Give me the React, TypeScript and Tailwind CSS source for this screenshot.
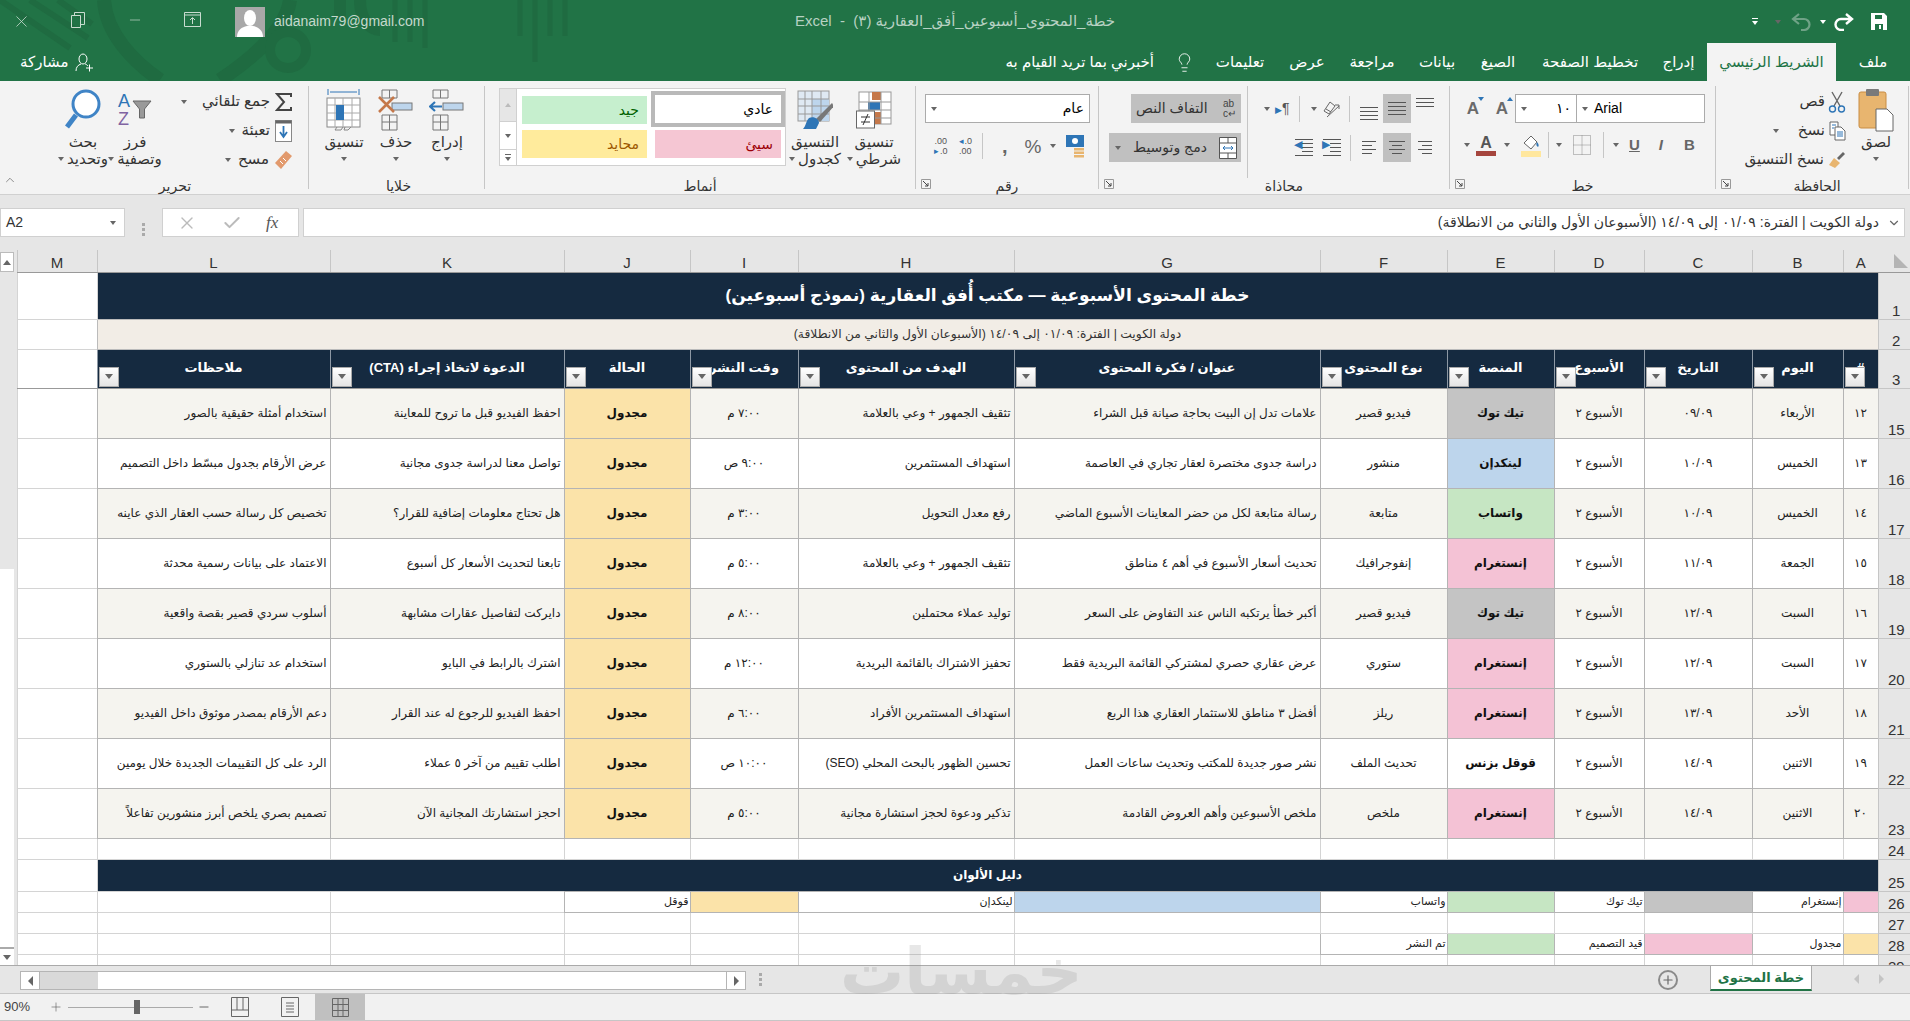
import type { ReactNode } from 'react';
import { X, Minus, Lightbulb, Check, ChevronUp, ChevronDown, Plus } from 'lucide-react';

const Caret = ({ className = '' }: { className?: string }) => (
  <span className={`inline-block h-0 w-0 border-x-[3px] border-t-[4px] border-x-transparent border-t-[#666] ${className}`} />
);

const Lines = ({ widths, align = 'center', gap = 'gap-[3px]', color = 'bg-[#555]' }: { widths: string[]; align?: string; gap?: string; color?: string }) => (
  <div className={`flex flex-col ${gap} ${align === 'center' ? 'items-center' : align === 'right' ? 'items-end' : 'items-start'}`}>
    {widths.map((w, i) => (
      <div key={i} className={`h-px ${w} ${color}`} />
    ))}
  </div>
);

const Launcher = () => (
  <svg width="10" height="10" viewBox="0 0 10 10" className="absolute bottom-0 left-[5px]">
    <path d="M.5 9.5V.5h9v9z" fill="none" stroke="#999" />
    <path d="M2 2l5 5M7 4v3H4" fill="none" stroke="#444" />
  </svg>
);

function Group({ w, label, launcher, labelClass = '', children }: { w: string; label: string; launcher?: boolean; labelClass?: string; children: ReactNode }) {
  return (
    <div className={`relative my-[5px] flex flex-col border-r border-[#c6c6c6] ${w}`}>
      <div className="flex h-[92px] shrink-0">{children}</div>
      <div className={`flex h-[16px] shrink-0 items-center justify-center text-[14px] text-[#333] ${labelClass}`}>{label}</div>
      {launcher && <Launcher />}
    </div>
  );
}

function LargeBtn({ w, icon, line1, line2, caretFirst }: { w: string; icon: ReactNode; line1: string; line2?: string; caretFirst?: boolean }) {
  return (
    <div className={`flex flex-col items-center text-[15px] leading-[17px] text-[#333] ${w}`}>
      <div className="flex h-[47px] items-center justify-center">{icon}</div>
      <div className="whitespace-nowrap">{line1}</div>
      {line2 ? (
        <div className="flex items-center gap-[3px] whitespace-nowrap">
          {caretFirst && <Caret />}
          {line2}
        </div>
      ) : (
        <div className="flex h-[17px] items-center">
          <Caret />
        </div>
      )}
    </div>
  );
}

const PasteIcon = () => (
  <svg width="36" height="46" viewBox="0 0 36 46">
    <rect x="1" y="5" width="27" height="36" rx="2" fill="#e8b56f" stroke="#c98d45" />
    <rect x="8" y="2" width="13" height="7" rx="1" fill="#7a7a7a" />
    <path d="M18 22h11l6 6v16H18z" fill="#fff" stroke="#666" />
  </svg>
);
const ScissorsIcon = () => (
  <svg width="18" height="22" viewBox="0 0 18 22" fill="none">
    <path d="M4 1l8 14M14 1L6 15" stroke="#666" strokeWidth="1.4" />
    <circle cx="4.5" cy="18" r="3" stroke="#2e75b6" strokeWidth="1.4" />
    <circle cx="13.5" cy="18" r="3" stroke="#2e75b6" strokeWidth="1.4" />
  </svg>
);
const CopyIcon = () => (
  <svg width="17" height="20" viewBox="0 0 17 20" fill="#fff">
    <path d="M1 1h8v13H1z" stroke="#666" />
    <path d="M6 6h6l4 4v9H6z" stroke="#666" />
    <path d="M3 4h4M3 7h2M8 11h6M8 13h6M8 15h6" stroke="#2e75b6" />
  </svg>
);
const BrushIcon = () => (
  <svg width="18" height="18" viewBox="0 0 18 18">
    <path d="M1 14l5-7 6 5-5 5z" fill="#e8b56f" />
    <path d="M9 7l6-6 2 2-6 6z" fill="#666" />
  </svg>
);
const GrowA = ({ up }: { up?: boolean }) => (
  <div className="relative flex h-[24px] w-[22px] items-center justify-center text-[17px] font-bold text-[#6a6a6a] font-['Liberation_Sans']">
    A
    <span className={`absolute right-0 top-0 h-0 w-0 border-x-[3px] border-x-transparent ${up ? 'border-b-[4px] border-b-[#2e75b6]' : 'border-t-[4px] border-t-[#2e75b6]'}`} />
  </div>
);
const BorderIcon = () => (
  <svg width="18" height="20" viewBox="0 0 18 20" fill="none" stroke="#888" strokeDasharray="1 1">
    <path d="M.5.5h17v19H.5zM9 .5v19M.5 10h17" />
  </svg>
);
const FillIcon = () => (
  <div className="flex flex-col items-center">
    <svg width="18" height="17" viewBox="0 0 18 17" fill="none">
      <path d="M2 9l7-7 6 6-6 7z" fill="#fff" stroke="#666" />
      <path d="M15 8c2 2 2 4 1 5-2-1-2-3-1-5z" fill="#2e75b6" />
    </svg>
    <div className="h-[6px] w-[20px] bg-[#ffe79e]" />
  </div>
);
const Orient = () => (
  <svg width="20" height="18" viewBox="0 0 20 18" fill="none" stroke="#666">
    <path d="M3 11l6-9 5 4-6 8zM5 9l5 3" />
    <path d="M6 17L18 6M14 5h4v4" />
  </svg>
);
const Accounting = () => (
  <svg width="20" height="24" viewBox="0 0 20 24">
    <rect x="1" y="1" width="18" height="12" fill="#2e75b6" />
    <circle cx="10" cy="7" r="3" fill="#fff" />
    <rect x="9" y="14" width="10" height="2.5" fill="#e8b56f" />
    <rect x="9" y="17.5" width="10" height="2.5" fill="#e8b56f" />
    <rect x="9" y="21" width="10" height="2.5" fill="#e8b56f" />
  </svg>
);
const DecIcon = ({ inc }: { inc?: boolean }) => (
  <div className="flex flex-col items-center text-[9px] leading-[10px] text-[#555] font-['Liberation_Sans']">
    <div className="flex items-center gap-px">
      {inc && <span className="text-[#2e75b6]">◂</span>}
      {inc ? '.0' : '.00'}
    </div>
    <div className="flex items-center gap-px">
      {!inc && <span className="text-[#2e75b6]">▸</span>}
      {inc ? '.00' : '.0'}
    </div>
  </div>
);
const CondIcon = () => (
  <svg width="36" height="38" viewBox="0 0 36 38">
    <rect x="3" y="1" width="32" height="32" fill="#fff" stroke="#999" />
    <rect x="16" y="1" width="9" height="8" fill="#c5784a" />
    <rect x="12" y="11" width="12" height="8" fill="#2e75b6" />
    <rect x="19" y="21" width="6" height="12" fill="#c5784a" />
    <path d="M3 11h32M3 19h32M3 27h32M13 1v32M25 1v32" stroke="#999" fill="none" />
    <rect x=".5" y="20" width="18" height="17" fill="#fff" stroke="#666" />
    <path d="M5 26h9M5 31h9M12 23l-5 11" stroke="#333" fill="none" />
  </svg>
);
const TableStyleIcon = () => (
  <svg width="36" height="40" viewBox="0 0 36 40">
    <rect x="1" y="1" width="31" height="30" fill="#dfe9f3" stroke="#999" />
    <rect x="15" y="9" width="17" height="22" fill="#bdd5ec" />
    <path d="M1 9h31M1 16h31M1 24h31M8 1v30M15 1v30M24 1v30" stroke="#999" fill="none" />
    <path d="M35 13l2 3-14 16-4-3z" fill="#777" />
    <path d="M12 28c5-2 10 1 10 5l-3 6H6c3-3 3-8 6-11z" fill="#2e75b6" />
  </svg>
);
const InsertIcon = ({ del }: { del?: boolean }) => (
  <svg width="36" height="42" viewBox="0 0 36 42" fill="none">
    <path d="M4 1h15v8H4zM11.5 1v8" stroke="#777" />
    <path d="M4 26h15v15H4zM4 33h15M11.5 26v15" stroke="#777" />
    <rect x="14" y="14" width="20" height="7" fill="#bdd5ec" stroke="#777" />
    {del ? (
      <path d="M1 8l15 15M16 8L1 23" stroke="#c5784a" strokeWidth="2.6" />
    ) : (
      <path d="M13 17.5H2M6 13l-5 4.5L6 22" stroke="#2e75b6" strokeWidth="2.2" />
    )}
  </svg>
);
const FormatIcon = () => (
  <svg width="36" height="44" viewBox="0 0 36 44" fill="none">
    <path d="M2 1v6M33 1v6M4 4h27" stroke="#2e75b6" />
    <rect x="1" y="10" width="33" height="29" fill="#fff" stroke="#888" />
    <path d="M1 17h33M1 25h33M1 32h33M9 10v29M17 10v29M26 10v29" stroke="#aaa" />
    <rect x="10" y="17" width="8" height="15" fill="#2e75b6" />
    <path d="M11 39l-2 3h6l2-3M19 39l-1 3h4l3-3" stroke="#888" />
  </svg>
);
const AzIcon = () => (
  <div className="flex items-center gap-[2px] font-['Liberation_Sans']">
    <div className="flex flex-col text-[18px] font-normal leading-[18px]">
      <span className="text-[#2e75b6]">A</span>
      <span className="text-[#8064a2]">Z</span>
    </div>
    <svg width="20" height="22" viewBox="0 0 20 22">
      <path d="M1 2h18l-6.5 8v9h-5v-9z" fill="#999" stroke="#666" />
    </svg>
  </div>
);
const SearchIcon = () => (
  <svg width="36" height="42" viewBox="0 0 36 42" fill="none">
    <circle cx="21" cy="15" r="13" stroke="#3f84c6" strokeWidth="3" fill="#fff" />
    <path d="M11 26L2 38" stroke="#3f84c6" strokeWidth="5" />
  </svg>
);
const FillDown = () => (
  <svg width="17" height="22" viewBox="0 0 17 22">
    <rect x=".5" y=".5" width="16" height="21" fill="#fff" stroke="#888" />
    <rect x=".5" y=".5" width="16" height="3" fill="#666" />
    <path d="M8.5 6v11M5 12l3.5 5 3.5-5" stroke="#2e75b6" strokeWidth="1.8" fill="none" />
  </svg>
);
const Eraser = () => (
  <svg width="18" height="20" viewBox="0 0 18 20">
    <path d="M1 13L12 1l6 5L7 19z" fill="#e29a6d" />
    <path d="M6 11l3 3M9 8l3 3" stroke="#fff" />
  </svg>
);
const Sigma = () => (
  <svg width="17" height="18" viewBox="0 0 17 18" fill="none">
    <path d="M16 4V1H2l7 8-7 8h14v-3" stroke="#444" strokeWidth="2" />
  </svg>
);

function StyleCell({ w, bg, text, label, box }: { w: string; bg: string; text: string; label: string; box?: boolean }) {
  return (
    <div className={`flex items-center justify-end pr-[8px] text-[14px] ${w} ${bg} ${text} ${box ? 'h-[36px] border-[4px] border-[#b9b9b9]' : 'h-[28px]'}`}>{label}</div>
  );
}

function Ribbon() {
  return (
    <div className="flex h-[114px] border-b border-[#d0d0d0] bg-[#f3f3f3]">
      <div className="flex w-[46px] items-end pb-[7px] pl-[3px]">
        <ChevronUp size={14} strokeWidth={1} className="text-[#444]" />
      </div>

      <Group w="w-[263px]" label="تحرير" labelClass="pr-[4px]">
        <div className="ml-[12px] w-[50px]">
          <LargeBtn w="w-full" icon={<SearchIcon />} line1="بحث" line2="وتحديد" caretFirst />
        </div>
        <LargeBtn w="w-[54px]" icon={<AzIcon />} line1="فرز" line2="وتصفية" caretFirst />
        <div className="flex w-[130px] flex-col items-end pt-[1px] text-[15px] text-[#333]">
          {[
            { t: 'جمع تلقائي', i: <Sigma />, m: 'mr-[10px]' },
            { t: 'تعبئة', i: <FillDown />, m: 'mr-[1px]' },
            { t: 'مسح', i: <Eraser />, m: 'mr-[2px]' },
          ].map((r) => (
            <div key={r.t} className="flex h-[29px] items-center gap-[5px]">
              <Caret className={r.m} />
              <span className="whitespace-nowrap">{r.t}</span>
              {r.i}
            </div>
          ))}
        </div>
      </Group>

      <Group w="w-[176px]" label="خلايا" labelClass="pl-[4px]">
        <div className="ml-[9px] flex">
          <LargeBtn w="w-[52px]" icon={<FormatIcon />} line1="تنسيق" />
          <LargeBtn w="w-[52px]" icon={<InsertIcon del />} line1="حذف" />
          <LargeBtn w="w-[50px]" icon={<InsertIcon />} line1="إدراج" />
        </div>
      </Group>

      <Group w="w-[431px]" label="أنماط">
        <div className="ml-[14px] mt-[2px] flex h-[78px] w-[287px] border border-[#d0d0d0] bg-white">
          <div className="flex w-[18px] flex-col border-r border-[#d0d0d0] text-[#888]">
            <div className="flex h-[32px] items-center justify-center bg-[#e6e6e6]"><span className="h-0 w-0 border-x-[3px] border-b-[4px] border-x-transparent border-b-[#bbb]" /></div>
            <div className="flex h-[29px] items-center justify-center border-y border-[#d0d0d0]"><Caret /></div>
            <div className="flex flex-1 flex-col items-center justify-center gap-[2px]"><div className="h-px w-[6px] bg-[#666]" /><Caret /></div>
          </div>
          <div className="flex flex-1 gap-[4px] py-[2px] pl-[5px]">
            <div className="flex w-[125px] flex-col justify-between py-[5px]">
              <StyleCell w="w-full" bg="bg-[#c6efce]" text="text-[#006100]" label="جيد" />
              <StyleCell w="w-full" bg="bg-[#ffeb9c]" text="text-[#9c5700]" label="محايد" />
            </div>
            <div className="flex w-[134px] flex-col justify-between pb-[5px]">
              <StyleCell w="w-full" bg="bg-white" text="text-black" label="عادي" box />
              <div className="pl-[4px] pr-[4px]"><StyleCell w="w-full" bg="bg-[#f5c6d3]" text="text-[#9c0006]" label="سيئ" /></div>
            </div>
          </div>
        </div>
        <div className="flex">
          <LargeBtn w="w-[58px]" icon={<TableStyleIcon />} line1="التنسيق" line2="كجدول" caretFirst />
          <LargeBtn w="w-[60px]" icon={<CondIcon />} line1="تنسيق" line2="شرطي" caretFirst />
        </div>
      </Group>

      <Group w="w-[183px]" label="رقم" launcher>
        <div className="ml-[9px] flex w-[165px] flex-col">
          <div className="mt-[8px] flex h-[29px] items-center justify-between border border-[#ababab] bg-white px-[5px] text-[14px]">
            <Caret />
            <span>عام</span>
          </div>
          <div className="mt-[10px] flex items-center pl-[9px] text-[#666]">
            <DecIcon />
            <div className="ml-[11px]"><DecIcon inc /></div>
            <div className="ml-[10px] h-[26px] w-px bg-[#c6c6c6]" />
            <span className="ml-[19px] text-[20px] font-bold leading-none font-['Liberation_Sans']">,</span>
            <span className="ml-[17px] text-[19px] leading-none font-['Liberation_Sans']">%</span>
            <Caret className="ml-[8px]" />
            <div className="ml-[9px]"><Accounting /></div>
          </div>
        </div>
      </Group>

      <Group w="w-[351px]" label="محاذاة" launcher labelClass="pl-[20px]">
        <div className="flex w-[148px] flex-col items-end gap-[10px] pt-[8px] pr-[6px] text-[14px] text-[#333]">
          <div className="flex h-[29px] w-[110px] items-center justify-between bg-[#c0c0c0] px-[5px]">
            <span className="whitespace-nowrap">التفاف النص</span>
            <div className="flex flex-col text-[10px] leading-[10px] text-[#444] font-['Liberation_Sans']"><span>ab</span><span>c↵</span></div>
          </div>
          <div className="flex h-[29px] w-[132px] items-center justify-between bg-[#c0c0c0] pl-[6px] pr-[4px]">
            <Caret />
            <span className="whitespace-nowrap">دمج وتوسيط</span>
            <svg width="18" height="22" viewBox="0 0 18 22" fill="#fff" stroke="#555"><path d="M.5.5h17v21H.5zM.5 6h17M.5 16h17M9 .5V6M9 16v5.5" /><path d="M4 11h10M6 9l-2 2 2 2M12 9l2 2-2 2" stroke="#2e75b6" fill="none" /></svg>
          </div>
        </div>
        <div className="flex flex-1 flex-col gap-[10px] border-l border-[#c6c6c6] pt-[8px]">
          <div className="flex h-[29px] items-center pl-[16px] text-[#555]">
            <Caret />
            <span className="ml-[5px] text-[14px] font-['Liberation_Sans']"><span className="text-[9px] text-[#2e75b6]">▶</span>¶</span>
            <div className="ml-[9px] h-[26px] w-px bg-[#c6c6c6]" />
            <Caret className="ml-[11px]" />
            <div className="ml-[4px]"><Orient /></div>
            <div className="ml-[8px] h-[26px] w-px bg-[#c6c6c6]" />
            <div className="ml-[10px] mt-[10px] w-[18px]"><Lines widths={['w-full', 'w-full', 'w-full', 'w-full']} /></div>
            <div className="ml-[5px] flex h-[29px] w-[28px] items-center justify-center bg-[#c0c0c0]"><Lines widths={['w-[18px]', 'w-[18px]', 'w-[18px]', 'w-[18px]']} /></div>
            <div className="ml-[5px] mb-[12px] w-[18px]"><Lines widths={['w-full', 'w-full', 'w-full']} /></div>
          </div>
          <div className="flex h-[29px] items-center pl-[47px] text-[#555]">
            <div className="relative w-[18px]"><Lines widths={['w-full', 'w-[11px]', 'w-[11px]', 'w-[11px]', 'w-full']} align="right" /><span className="absolute left-[-1px] top-[-3px] text-[11px] text-[#2e75b6]">◀</span></div>
            <div className="relative ml-[10px] w-[18px]"><Lines widths={['w-full', 'w-[11px]', 'w-[11px]', 'w-[11px]', 'w-full']} align="right" /><span className="absolute left-[-1px] top-[-3px] text-[11px] text-[#2e75b6]">▶</span></div>
            <div className="ml-[9px] h-[26px] w-px bg-[#c6c6c6]" />
            <div className="ml-[11px]"><Lines widths={['w-[14px]', 'w-[10px]', 'w-[14px]', 'w-[10px]']} align="left" /></div>
            <div className="ml-[7px] flex h-[29px] w-[28px] items-center justify-center bg-[#c0c0c0]"><Lines widths={['w-[16px]', 'w-[10px]', 'w-[16px]', 'w-[10px]']} /></div>
            <div className="ml-[7px]"><Lines widths={['w-[14px]', 'w-[10px]', 'w-[14px]', 'w-[10px]']} align="right" /></div>
          </div>
        </div>
      </Group>

      <Group w="w-[266px]" label="خط" launcher>
        <div className="flex w-full flex-col">
          <div className="mt-[8px] flex h-[29px] items-center pl-[12px]">
            <GrowA />
            <div className="ml-[7px]"><GrowA up /></div>
            <div className="ml-[2px] flex h-full w-[62px] items-center justify-between border border-[#ababab] bg-white px-[5px] text-[14px]">
              <Caret />
              <span>١٠</span>
            </div>
            <div className="flex h-full w-[128px] items-center border-y border-r border-[#ababab] bg-white px-[5px] text-[14px] font-['Liberation_Sans']">
              <Caret className="mr-[6px]" />
              Arial
            </div>
          </div>
          <div className="mt-[9px] flex items-center pl-[14px] text-[#666] font-['Liberation_Sans']">
            <Caret />
            <div className="ml-[6px] flex w-[20px] flex-col items-center">
              <span className="text-[16px] font-bold leading-[16px] text-[#555]">A</span>
              <div className="h-[5px] w-full bg-[#a5453d]" />
            </div>
            <Caret className="ml-[8px]" />
            <div className="ml-[11px]"><FillIcon /></div>
            <div className="ml-[7px] h-[26px] w-px bg-[#c6c6c6]" />
            <Caret className="ml-[7px]" />
            <div className="ml-[11px]"><BorderIcon /></div>
            <div className="ml-[12px] h-[26px] w-px bg-[#c6c6c6]" />
            <Caret className="ml-[9px]" />
            <span className="ml-[10px] text-[15px] font-bold underline">U</span>
            <span className="ml-[19px] text-[15px] font-bold italic">I</span>
            <span className="ml-[21px] text-[15px] font-bold">B</span>
          </div>
        </div>
      </Group>

      <Group w="w-[193px]" label="الحافظة" launcher labelClass="pl-[10px]">
        <div className="flex w-[140px] flex-col items-end pr-[10px] pt-[1px] text-[15px] text-[#333]">
          <div className="flex h-[29px] items-center gap-[3px]"><span>قص</span><ScissorsIcon /></div>
          <div className="flex h-[29px] items-center gap-[4px]"><Caret className="mr-[15px]" /><span>نسخ</span><CopyIcon /></div>
          <div className="flex h-[29px] items-center gap-[4px]"><span className="whitespace-nowrap">نسخ التنسيق</span><BrushIcon /></div>
        </div>
        <LargeBtn w="w-[40px]" icon={<PasteIcon />} line1="لصق" />
      </Group>
      <div className="flex-1" />
    </div>
  );
}

const titleBg = (
  <svg width="640" height="81" viewBox="0 0 640 81" className="absolute left-0 top-0" fill="none" stroke="#1f6b41">
    <path d="M0 0l70 48M30 0l58 38M58 0l34 24" strokeWidth="6" />
    <path d="M104 0c2 34 30 62 56 80M290 0c-4 30-40 60-70 80" strokeWidth="14" />
    <circle cx="288" cy="50" r="18" strokeWidth="10" />
    <path d="M395 0v42M410 0v42M425 0v48M520 0v36M535 0v62M550 0v36M565 0v36" strokeWidth="5" />
    <path d="M340 0v20M360 0c0 20 10 30 20 30" strokeWidth="12" />
  </svg>
);

function Chrome() {
  const tabs = [
    { t: 'ملف', w: 'w-[74px]' },
    { t: 'الشريط الرئيسي', w: 'w-[129px]', active: true },
    { t: 'إدراج', w: 'w-[57px]' },
    { t: 'تخطيط الصفحة', w: 'w-[120px]' },
    { t: 'الصيغ', w: 'w-[64px]' },
    { t: 'بيانات', w: 'w-[58px]' },
    { t: 'مراجعة', w: 'w-[72px]' },
    { t: 'عرض', w: 'w-[58px]' },
    { t: 'تعليمات', w: 'w-[76px]' },
  ];
  return (
    <div className="relative h-[81px] overflow-hidden bg-[#217346] text-white">
      {titleBg}
      <div className="relative grid h-[43px] grid-cols-[1fr_auto_1fr] items-center">
        <div className="flex items-center">
          <div className="flex gap-[15px] text-[#c9dcd0]">
            <div className="flex w-[42px] justify-center"><X size={19} strokeWidth={1} /></div>
            <div className="flex w-[42px] justify-center">
              <svg width="14" height="16" viewBox="0 0 14 16" fill="none" stroke="currentColor"><path d="M.5 3.5h9v12h-9zM3.5 3V.5h10v12H10" /></svg>
            </div>
            <div className="flex w-[42px] justify-center"><Minus size={16} strokeWidth={1} /></div>
            <div className="flex w-[42px] justify-center">
              <svg width="17" height="15" viewBox="0 0 17 15" fill="none" stroke="currentColor"><path d="M.5.5h16v14H.5zM.5 3h16M8.5 12V6M6 8l2.5-2.5L11 8" /></svg>
            </div>
          </div>
          <div className="ml-[22px] flex h-[30px] w-[30px] items-end justify-center overflow-hidden bg-[#a8a8a8]">
            <svg width="26" height="28" viewBox="0 0 26 28" fill="#fff"><ellipse cx="13" cy="9" rx="6" ry="8" /><path d="M0 28c0-7 5-10 10-11h6c5 1 10 4 10 11z" /></svg>
          </div>
          <span className="ml-[9px] text-[14px] text-[#c5d9cd]">aidanaim79@gmail.com</span>
        </div>
        <div dir="rtl" className="whitespace-nowrap text-[15px] text-[#b7d1c2]">
          خطة_المحتوى_أسبوعين_أفق_العقارية (٣) &nbsp;-&nbsp; Excel
        </div>
        <div className="flex items-center justify-end pr-[23px]">
          <div className="flex w-[14px] flex-col items-center gap-[2px]"><div className="h-px w-[6px] bg-white" /><Caret className="border-t-white" /></div>
          <Caret className="ml-[13px] border-t-[#6fa286]" />
          <svg width="20" height="18" viewBox="0 0 20 18" fill="none" stroke="#6fa286" strokeWidth="2.2" className="ml-[10px]"><path d="M8 1L2 6l6 5M2 6h11a5 5 0 0 1 0 11h-3" /></svg>
          <Caret className="ml-[9px] border-t-white" />
          <svg width="20" height="18" viewBox="0 0 20 18" fill="none" stroke="#fff" strokeWidth="2.4" className="ml-[8px]"><path d="M12 1l6 5-6 5M18 6H7a5 5 0 0 0 0 11h3" /></svg>
          <svg width="16" height="17" viewBox="0 0 16 17" fill="#fff" className="ml-[17px]"><path d="M0 0h13l3 3v14H0zM4 2v4h7V2zM4 11v6h8v-6z" fillRule="evenodd" /><rect x="8" y="12" width="2" height="4" /></svg>
        </div>
      </div>
      <div className="relative flex h-[38px] items-stretch justify-between">
        <div className="flex items-center gap-[7px] pl-[20px] text-[15px]">
          <span>مشاركة</span>
          <svg width="19" height="19" viewBox="0 0 19 19" fill="none" stroke="#fff"><ellipse cx="8" cy="6" rx="4" ry="5" /><path d="M1 18c0-4 2-6 5-7M10 11c1 0 2 1 3 2M11 15h7M14.5 11.5v7" /></svg>
        </div>
        <div className="flex flex-row-reverse items-stretch text-[15px]">
          {tabs.map((t) => (
            <div key={t.t} className={`flex items-center justify-center whitespace-nowrap ${t.w} ${t.active ? 'bg-[#f3f3f3] text-[#217346]' : ''}`}>{t.t}</div>
          ))}
          <div className="flex w-[36px] items-center justify-center"><Lightbulb size={21} strokeWidth={1} /></div>
          <div className="flex items-center pr-[12px]">أخبرني بما تريد القيام به</div>
        </div>
      </div>
    </div>
  );
}

function FormulaBar() {
  return (
    <div className="flex h-[55px] bg-[#e6e6e6] pt-[13px]">
      <div className="flex h-[29px] w-[125px] items-center justify-between border border-[#d0d0d0] bg-white pl-[5px] pr-[8px] text-[14px] text-[#333] font-['Liberation_Sans']">
        A2
        <Caret />
      </div>
      <div className="flex w-[37px] flex-col items-center justify-center gap-[2px]">
        <div className="h-[3px] w-[3px] bg-[#aaa]" /><div className="h-[3px] w-[3px] bg-[#aaa]" /><div className="h-[3px] w-[3px] bg-[#aaa]" />
      </div>
      <div className="flex h-[29px] w-[137px] items-center border border-[#d0d0d0] bg-white pl-[14px] text-[#bbb]">
        <X size={20} strokeWidth={1.6} />
        <Check size={20} strokeWidth={2.4} className="ml-[25px]" />
        <span className="ml-[24px] text-[17px] italic text-[#555] font-['Liberation_Serif']">fx</span>
      </div>
      <div className="ml-[4px] mr-[5px] flex h-[29px] flex-1 items-center border border-[#d0d0d0] bg-white pl-[8px] pr-[3px] text-[14px] text-[#333]" dir="rtl">
        <ChevronDown size={14} strokeWidth={2} className="ml-[8px] text-[#666]" />
        <span>دولة الكويت | الفترة: ٠١/٠٩ إلى ١٤/٠٩ (الأسبوعان الأول والثاني من الانطلاقة)</span>
      </div>
    </div>
  );
}

const rows = [
  ['١٢', 'الأربعاء', '٠٩/٠٩', 'تيك توك', 'فيديو قصير', 'علامات تدل إن البيت بحاجة صيانة قبل الشراء', 'تثقيف الجمهور + وعي بالعلامة', '٧:٠٠ م', 'احفظ الفيديو قبل ما تروح للمعاينة', 'استخدام أمثلة حقيقية بالصور', '15'],
  ['١٣', 'الخميس', '١٠/٠٩', 'لينكدإن', 'منشور', 'دراسة جدوى مختصرة لعقار تجاري في العاصمة', 'استهداف المستثمرين', '٩:٠٠ ص', 'تواصل معنا لدراسة جدوى مجانية', 'عرض الأرقام بجدول مبسّط داخل التصميم', '16'],
  ['١٤', 'الخميس', '١٠/٠٩', 'واتساب', 'متابعة', 'رسالة متابعة لكل من حضر المعاينات الأسبوع الماضي', 'رفع معدل التحويل', '٣:٠٠ م', 'هل تحتاج معلومات إضافية للقرار؟', 'تخصيص كل رسالة حسب العقار الذي عاينه', '17'],
  ['١٥', 'الجمعة', '١١/٠٩', 'إنستغرام', 'إنفوجرافيك', 'تحديث أسعار الأسبوع في أهم ٤ مناطق', 'تثقيف الجمهور + وعي بالعلامة', '٥:٠٠ م', 'تابعنا لتحديث الأسعار كل أسبوع', 'الاعتماد على بيانات رسمية محدثة', '18'],
  ['١٦', 'السبت', '١٢/٠٩', 'تيك توك', 'فيديو قصير', 'أكبر خطأ يرتكبه الناس عند التفاوض على السعر', 'توليد عملاء محتملين', '٨:٠٠ م', 'دايركت لتفاصيل عقارات مشابهة', 'أسلوب سردي قصير بقصة واقعية', '19'],
  ['١٧', 'السبت', '١٢/٠٩', 'إنستغرام', 'ستوري', 'عرض عقاري حصري لمشتركي القائمة البريدية فقط', 'تحفيز الاشتراك بالقائمة البريدية', '١٢:٠٠ م', 'اشترك بالرابط في البايو', 'استخدام عد تنازلي بالستوري', '20'],
  ['١٨', 'الأحد', '١٣/٠٩', 'إنستغرام', 'ريلز', 'أفضل ٣ مناطق للاستثمار العقاري هذا الربع', 'استهداف المستثمرين الأفراد', '٦:٠٠ م', 'احفظ الفيديو للرجوع له عند القرار', 'دعم الأرقام بمصدر موثوق داخل الفيديو', '21'],
  ['١٩', 'الاثنين', '١٤/٠٩', 'قوقل بزنس', 'تحديث الملف', 'نشر صور جديدة للمكتب وتحديث ساعات العمل', 'تحسين الظهور بالبحث المحلي (SEO)', '١٠:٠٠ ص', 'اطلب تقييم من آخر ٥ عملاء', 'الرد على كل التقييمات الجديدة خلال يومين', '22'],
  ['٢٠', 'الاثنين', '١٤/٠٩', 'إنستغرام', 'ملخص', 'ملخص الأسبوعين وأهم العروض القادمة', 'تذكير ودعوة لحجز استشارة مجانية', '٥:٠٠ م', 'احجز استشارتك المجانية الآن', 'تصميم بصري يلخص أبرز منشورين تفاعلاً', '23'],
];

const platformBg: Record<string, string> = {
  'تيك توك': 'bg-[#c4c4c4]',
  'لينكدإن': 'bg-[#bdd5ec]',
  'واتساب': 'bg-[#c6e6c3]',
  'إنستغرام': 'bg-[#f4c2d5]',
  'قوقل بزنس': 'bg-white',
};

const letters = ['A', 'B', 'C', 'D', 'E', 'F', 'G', 'H', 'I', 'J', 'K', 'L', 'M'];
const headers = ['#', 'اليوم', 'التاريخ', 'الأسبوع', 'المنصة', 'نوع المحتوى', 'عنوان / فكرة المحتوى', 'الهدف من المحتوى', 'وقت النشر', 'الحالة', 'الدعوة لاتخاذ إجراء (CTA)', 'ملاحظات'];

const RowHead = ({ n }: { n: string }) => (
  <td className="border-b border-l border-b-[#c6c6c6] border-l-[#c6c6c6] bg-[#e6e6e6] pl-[4px] text-center align-bottom text-[15px] leading-[17px] text-[#333] font-['Liberation_Sans']">{n}</td>
);

const grid = 'border border-[#d4d4d4]';
const strong = 'border border-[#b4b4b4]';

function FilterBtn() {
  return (
    <span className="absolute bottom-[1px] left-[1px] flex h-[20px] w-[20px] items-center justify-center border border-[#aaa] bg-gradient-to-b from-white to-[#e4e4e4]">
      <Caret className="border-x-[4px] border-t-[5px]" />
    </span>
  );
}

function LegendRow({ n, cells }: { n: string; cells: { bg?: string; t?: string }[] }) {
  return (
    <tr className="h-[21px]">
      <RowHead n={n} />
      {letters.map((l, i) => {
        const c = cells[i];
        return (
          <td key={l} className={`${c ? strong : grid} px-[1px] text-right text-[11px] text-[#222] ${c?.bg ?? ''}`}>
            {c?.t}
          </td>
        );
      })}
    </tr>
  );
}

function Sheet() {
  return (
    <div className="flex h-[715px] overflow-hidden bg-[#e6e6e6]">
      <div className="flex w-[17px] flex-col pr-[3px]">
        <div className="mt-[2px] flex h-[20px] shrink-0 items-center justify-center border border-[#bbb] bg-white"><span className="h-0 w-0 border-x-[4px] border-b-[5px] border-x-transparent border-b-[#666]" /></div>
        <div className="h-[297px] shrink-0" />
        <div className="flex-1 bg-white" />
        <div className="flex h-[18px] shrink-0 items-center justify-center border-t-2 border-[#aaa] bg-white"><Caret className="border-x-[4px] border-t-[5px]" /></div>
      </div>
      <table dir="rtl" className="w-[1893px] table-fixed border-collapse self-start bg-white">
        <colgroup>
          <col className="w-[32px]" />
          <col className="w-[35px]" />
          <col className="w-[91px]" />
          <col className="w-[108px]" />
          <col className="w-[90px]" />
          <col className="w-[107px]" />
          <col className="w-[127px]" />
          <col className="w-[306px]" />
          <col className="w-[216px]" />
          <col className="w-[108px]" />
          <col className="w-[126px]" />
          <col className="w-[234px]" />
          <col className="w-[233px]" />
          <col className="w-[80px]" />
        </colgroup>
        <tbody>
          <tr className="h-[22px]">
            <td className="border-b border-[#999] bg-[#e6e6e6] align-top">
              <div className="ml-auto mr-[2px] mt-[4px] h-0 w-0 border-b-[14px] border-r-[14px] border-b-[#b4b4b4] border-r-transparent" />
            </td>
            {letters.map((l) => (
              <td key={l} className="border-b border-l border-b-[#999] border-l-[#c6c6c6] bg-[#e6e6e6] pt-[3px] text-center text-[15px] leading-[15px] text-[#333] font-['Liberation_Sans']">{l}</td>
            ))}
          </tr>
          <tr className="h-[47px]">
            <RowHead n="1" />
            <td colSpan={12} className="bg-[#152a40] text-center text-[17px] font-bold text-white">
              خطة المحتوى الأسبوعية — مكتب أُفق العقارية (نموذج أسبوعين)
            </td>
            <td className={grid} />
          </tr>
          <tr className="h-[30px]">
            <RowHead n="2" />
            <td colSpan={12} className="border border-[#bbb] bg-[#f2ede6] text-center text-[12.3px] text-[#333]">
              دولة الكويت | الفترة: ٠١/٠٩ إلى ١٤/٠٩ (الأسبوعان الأول والثاني من الانطلاقة)
            </td>
            <td className={grid} />
          </tr>
          <tr className="h-[39px]">
            <RowHead n="3" />
            {headers.map((h) => (
              <td key={h} className="relative border-x border-b border-x-[#8d98a4] border-b-[#999] bg-[#152a40] text-center text-[13px] font-bold text-white">
                <span className="relative bottom-[1px]">{h}</span>
                <FilterBtn />
              </td>
            ))}
            <td className="border-x border-b border-x-[#d4d4d4] border-b-[#999]" />
          </tr>
          {rows.map((r, i) => {
            const bg = i % 2 === 0 ? 'bg-[#f5f4ef]' : 'bg-white';
            const c = `${strong} ${bg} text-center text-[12px] text-[#222]`;
            const t = `${strong} ${bg} whitespace-nowrap pr-[3px] text-right text-[12px] text-[#222]`;
            return (
              <tr key={r[0]} className="h-[50px]">
                <RowHead n={r[10]} />
                <td className={c}>{r[0]}</td>
                <td className={c}>{r[1]}</td>
                <td className={c}>{r[2]}</td>
                <td className={c}>الأسبوع ٢</td>
                <td className={`${strong} ${platformBg[r[3]]} text-center text-[12px] font-bold text-[#111]`}>{r[3]}</td>
                <td className={c}>{r[4]}</td>
                <td className={t}>{r[5]}</td>
                <td className={t}>{r[6]}</td>
                <td className={c}>{r[7]}</td>
                <td className={`${strong} bg-[#fbe3a9] text-center text-[12px] font-bold text-[#111]`}>مجدول</td>
                <td className={t}>{r[8]}</td>
                <td className={t}>{r[9]}</td>
                <td className={grid} />
              </tr>
            );
          })}
          <LegendRow n="24" cells={[]} />
          <tr className="h-[32px]">
            <RowHead n="25" />
            <td colSpan={12} className="bg-[#152a40] text-center text-[12px] font-bold text-white">دليل الألوان</td>
            <td className={grid} />
          </tr>
          <LegendRow
            n="26"
            cells={[
              { bg: 'bg-[#f4c2d5]' }, { t: 'إنستغرام' }, { bg: 'bg-[#c4c4c4]' }, { t: 'تيك توك' }, { bg: 'bg-[#c6e6c3]' }, { t: 'واتساب' },
              { bg: 'bg-[#bdd5ec]' }, { t: 'لينكدإن' }, { bg: 'bg-[#fbe3a9]' }, { t: 'قوقل' },
            ]}
          />
          <LegendRow n="27" cells={[]} />
          <LegendRow
            n="28"
            cells={[
              { bg: 'bg-[#fbe3a9]' }, { t: 'مجدول' }, { bg: 'bg-[#f4c2d5]' }, { t: 'قيد التصميم' }, { bg: 'bg-[#c6e6c3]' }, { t: 'تم النشر' },
            ]}
          />
          <LegendRow n="29" cells={[]} />
        </tbody>
      </table>
    </div>
  );
}

function BottomBars() {
  return (
    <>
      <div className="flex h-[28px] items-start border-t border-[#aaa] bg-[#e6e6e6]">
        <div className="ml-[20px] mt-[5px] flex h-[19px] w-[726px] shrink-0 border border-[#b5b5b5] bg-white">
          <div className="flex w-[19px] items-center justify-center border-r border-[#b5b5b5]"><span className="h-0 w-0 border-y-[5px] border-r-[5px] border-y-transparent border-r-[#666]" /></div>
          <div className="w-[58px] bg-[#d9d9d9]" />
          <div className="flex-1" />
          <div className="flex w-[19px] items-center justify-center border-l border-[#b5b5b5]"><span className="h-0 w-0 border-y-[5px] border-l-[5px] border-y-transparent border-l-[#666]" /></div>
        </div>
        <div className="ml-[13px] mt-[7px] flex flex-col gap-[2px]">
          <div className="h-[3px] w-[3px] bg-[#aaa]" /><div className="h-[3px] w-[3px] bg-[#aaa]" /><div className="h-[3px] w-[3px] bg-[#aaa]" />
        </div>
        <div className="flex-1" />
        <div className="mt-[4px] flex h-[20px] w-[20px] items-center justify-center rounded-full border-2 border-[#8a8a8a] text-[#666]"><Plus size={14} strokeWidth={2} /></div>
        <div className="ml-[32px] flex h-[25px] w-[102px] items-center justify-center border-x border-b-[2px] border-x-[#aaa] border-b-[#217346] bg-white text-[13px] font-bold text-[#217346]">خطة المحتوى</div>
        <div className="ml-[42px] mt-[8px] flex gap-[20px] pr-[26px]">
          <span className="h-0 w-0 border-y-[5px] border-r-[5px] border-y-transparent border-r-[#c4c4c4]" />
          <span className="h-0 w-0 border-y-[5px] border-l-[5px] border-y-transparent border-l-[#c4c4c4]" />
        </div>
      </div>
      <div className="flex h-[28px] items-stretch border-y border-t-[#c6c6c6] border-b-[#c6c6c6] bg-[#f1f1f1] text-[#555]">
        <span className="ml-[4px] w-[30px] self-center text-[13px] text-[#444] font-['Liberation_Sans']">90%</span>
        <div className="ml-[15px] flex items-center">
          <Plus size={14} strokeWidth={1} />
          <div className="relative ml-[5px] h-px w-[125px] bg-[#aaa]">
            <div className="absolute left-[66px] top-[-7px] h-[14px] w-[6px] bg-[#666]" />
          </div>
          <Minus size={14} strokeWidth={1.5} className="ml-[4px]" />
        </div>
        <div className="ml-[20px] flex items-center">
          <svg width="18" height="20" viewBox="0 0 18 20" fill="none" stroke="#666"><path d="M.5.5h17v19H.5zM.5 13h17M6 .5V13M12 .5V13" /></svg>
        </div>
        <div className="ml-[32px] flex items-center">
          <svg width="18" height="20" viewBox="0 0 18 20" fill="none" stroke="#666"><path d="M.5.5h17v19H.5zM5 6h8M5 9h8M5 12h8M5 15h8" /></svg>
        </div>
        <div className="ml-[16px] flex w-[50px] items-center justify-center bg-[#c0c0c0]">
          <svg width="17" height="19" viewBox="0 0 17 19" fill="none" stroke="#666"><path d="M.5.5h16v18H.5zM.5 6.5h16M.5 12.5h16M6 .5v18M11 .5v18" /></svg>
        </div>
      </div>
    </>
  );
}

export default function App() {
  return (
    <div className="relative h-[1021px] w-[1910px] overflow-hidden bg-[#e6e6e6] font-['Liberation_Sans','DejaVu_Sans',sans-serif]">
      <Chrome />
      <Ribbon />
      <FormulaBar />
      <Sheet />
      <BottomBars />
      {/* watermark over the sheet tabs */}
      <div className="pointer-events-none absolute left-[840px] top-[940px] text-[64px] font-bold leading-none text-[#8a8a8a] opacity-20">خمسات</div>
    </div>
  );
}
